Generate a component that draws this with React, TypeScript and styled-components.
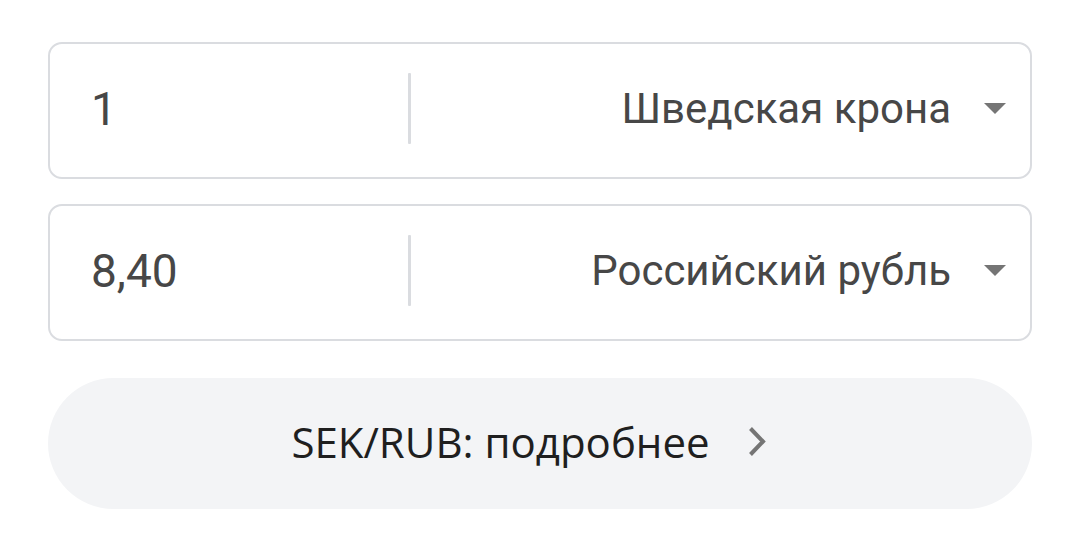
import React from 'react';
import styled, { createGlobalStyle } from 'styled-components';

const GlobalStyle = createGlobalStyle`
  html, body {
    margin: 0;
    padding: 0;
    background: #ffffff;
  }
  body {
    font-family: Roboto, "Liberation Sans", sans-serif;
  }
`;

interface RowData {
  amount: string;
  currency: string;
}

const rows: RowData[] = [
  { amount: '1', currency: 'Шведская крона' },
  { amount: '8,40', currency: 'Российский рубль' },
];

const Page = styled.div`
  width: 984px;
  padding: 42px 0 0 48px;
  display: flex;
  flex-direction: column;
`;

const Rows = styled.div`
  display: flex;
  flex-direction: column;
  gap: 25px;
`;

const Field = styled.div`
  box-sizing: border-box;
  height: 137px;
  border: 2px solid #dadce0;
  border-radius: 14px;
  display: flex;
  align-items: center;
`;

const Amount = styled.div`
  box-sizing: border-box;
  width: 358px;
  padding: 0 0 4px 41px;
  font-size: 46px;
  color: #474747;
  line-height: 1;
`;

const Divider = styled.div`
  width: 3px;
  height: 71px;
  margin-bottom: 5px;
  background: #dadce0;
  border-radius: 1px;
`;

const Select = styled.div`
  flex: 1;
  display: flex;
  align-items: center;
  justify-content: flex-end;
  gap: 33px;
  padding: 0 24px 4px 0;
  font-size: 42px;
  color: #474747;
  line-height: 1;
`;

const Arrow = styled.span`
  width: 0;
  height: 0;
  border-left: 11px solid transparent;
  border-right: 11px solid transparent;
  border-top: 11px solid #757575;
`;

const MoreButton = styled.div`
  margin-top: 37px;
  height: 131px;
  box-sizing: border-box;
  padding: 0 22px 4px 0;
  border-radius: 66px;
  background: #f3f4f6;
  display: flex;
  align-items: center;
  justify-content: center;
  gap: 38px;
  font-family: "Open Sans", Lato, sans-serif;
  font-weight: 500;
  font-size: 42px;
  color: #1f1f1f;
`;

const Chevron = () => (
  <svg width="19" height="29" viewBox="0 0 19 29">
    <path d="M2.5 1.5 L15 14.5 L2.5 27.5" fill="none" stroke="#757575" strokeWidth="4" />
  </svg>
);

export default function App() {
  return (
    <>
      <GlobalStyle />
      <Page>
        <Rows>
          {rows.map((r) => (
            <Field key={r.currency}>
              <Amount>{r.amount}</Amount>
              <Divider />
              <Select>
                {r.currency}
                <Arrow />
              </Select>
            </Field>
          ))}
        </Rows>
        <MoreButton>
          SEK/RUB: подробнее
          <Chevron />
        </MoreButton>
      </Page>
    </>
  );
}
